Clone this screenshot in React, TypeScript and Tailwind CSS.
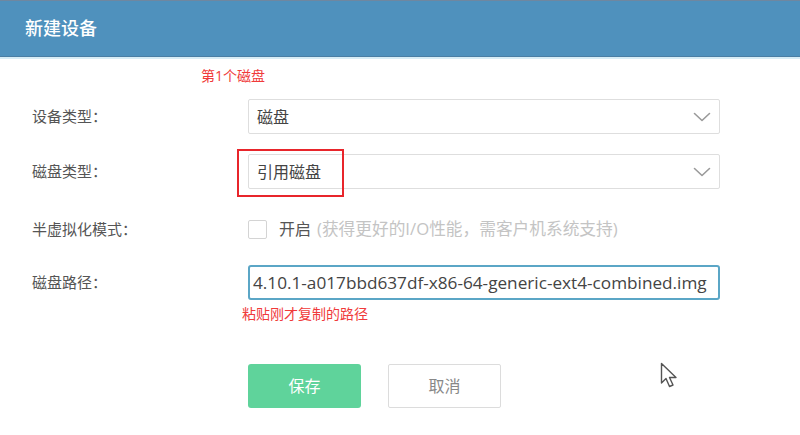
import React from 'react';

const font = { fontFamily: '"Open Sans", "Noto Sans CJK SC", sans-serif' };

const Chevron: React.FC = () => (
    <svg width="18" height="10" viewBox="0 0 18 10" fill="none" stroke="#9a9a9a" strokeWidth="1.6" strokeLinecap="round" strokeLinejoin="round">
        <path d="M1.5 1.5 L9 8.5 L16.5 1.5" />
    </svg>
);

const Cursor: React.FC = () => (
    <svg width="22" height="28" viewBox="0 0 22 28" className="absolute left-[660px] top-[362px]">
        <path d="M1.5 1.5 L1.5 21 L6 16.5 L9.5 24.5 L13 23 L9.5 15.5 L16 15.5 Z" fill="#fff" stroke="#555" strokeWidth="1.4" strokeLinejoin="round" />
    </svg>
);

const Label: React.FC<{ children: React.ReactNode }> = ({ children }) => (
    <div className="w-[248px] shrink-0 pl-[32px] text-[15px] text-[#555]">{children}</div>
);

const App: React.FC = () => {
    return (
        <div className="relative w-[800px] h-[435px] bg-white overflow-hidden" style={font}>
            <div className="h-[57px] bg-[#4f91bd] border-t border-[#6f87a0] border-b border-b-[#4a7ea4] flex items-center pl-[25px]">
                <span className="text-white text-[18px] font-medium">新建设备</span>
            </div>
            <div className="h-[2px] bg-[#d8edf6]" />

            <div className="pl-[201px] pt-[6px] h-[40px] text-[14px] text-[#f03a3a]">第1个磁盘</div>

            <div className="flex items-center h-[35px]">
                <Label>设备类型：</Label>
                <div className="w-[472px] h-[35px] border border-[#dedede] rounded-[2px] flex items-center justify-between pl-[8px] pr-[8px] text-[16px] text-[#444]">
                    <span>磁盘</span>
                    <Chevron />
                </div>
            </div>

            <div className="flex items-center h-[35px] mt-[20px]">
                <Label>磁盘类型：</Label>
                <div className="relative w-[472px] h-[35px] border border-[#dedede] rounded-[2px] flex items-center justify-between pl-[8px] pr-[8px] text-[16px] text-[#444]">
                    <span>引用磁盘</span>
                    <Chevron />
                    <div className="absolute left-[-12px] top-[-6px] w-[107px] h-[48px] border-2 border-[#e8252b]" />
                </div>
            </div>

            <div className="flex items-center h-[20px] mt-[30px]">
                <Label>半虚拟化模式：</Label>
                <div className="w-[19px] h-[19px] border border-[#d4d4d4] rounded-[2px]" />
                <span className="ml-[12px] text-[16px] text-[#555]">开启</span>
                <span className="ml-[6px] text-[16.7px] text-[#c4c4c4]">(获得更好的I/O性能，需客户机系统支持)</span>
            </div>

            <div className="flex items-center h-[35px] mt-[26px]">
                <Label>磁盘路径：</Label>
                <div className="w-[472px] h-[35px] border-2 border-[#5ba6c6] rounded-[3px] flex items-center overflow-hidden pl-[3px] text-[17.2px] text-[#444] whitespace-nowrap">
                    <span>4.10.1-a017bbd637df-x86-64-generic-ext4-combined.img</span>
                </div>
            </div>
            <div className="pl-[242px] pt-[3px] text-[14px] text-[#f03a3a]">粘贴刚才复制的路径</div>

            <div className="flex gap-[27px] pl-[248px] mt-[40px]">
                <button className="w-[113px] h-[44px] rounded-[3px] bg-[#5fd39b] text-white text-[16px]">保存</button>
                <button className="w-[113px] h-[44px] rounded-[2px] border border-[#dcdcdc] bg-white text-[#888] text-[16px]">取消</button>
            </div>

            <Cursor />
        </div>
    );
};

export default App;
